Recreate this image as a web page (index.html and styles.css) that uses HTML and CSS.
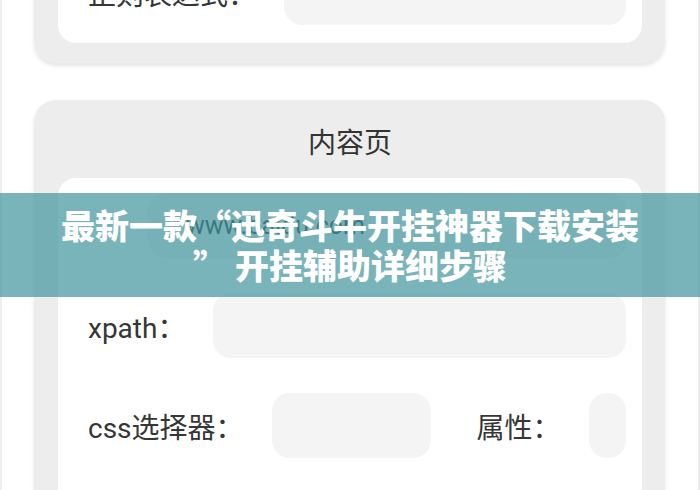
FILE: index.html
```html
<!DOCTYPE html>
<html lang="zh-CN">
<head>
    <meta charset="UTF-8">
    <meta name="viewport" content="width=device-width, initial-scale=1.0">
    <title>最新一款迅奇斗牛开挂神器下载安装</title>
    <link rel="stylesheet" href="styles.css">
</head>
<body>
    <div class="page">
        <div class="card card-top">
            <div class="card-inner">
                <div class="row">
                    <span class="label">正则表达式：</span>
                    <div class="field"></div>
                </div>
            </div>
        </div>

        <div class="card">
            <div class="card-title">内容页</div>
            <div class="card-inner card-inner-long">
                <div class="row">
                    <div class="field field-url">www.baidu.com</div>
                </div>
                <div class="row">
                    <span class="label">xpath：</span>
                    <div class="field"></div>
                </div>
                <div class="row">
                    <span class="label">css选择器：</span>
                    <div class="field field-css"></div>
                    <span class="label">属性：</span>
                    <div class="field"></div>
                </div>
            </div>
        </div>
    </div>

    <div class="banner">最新一款“迅奇斗牛开挂神器下载安装<br>” 开挂辅助详细步骤</div>
</body>
</html>
```

FILE: styles.css
```css
html, body { margin: 0; padding: 0; background: #fff; overflow: hidden; }
body { font-family: Roboto, "Noto Sans CJK SC", sans-serif; color: #333; height: 490px; position: relative; }
.page { border-left: 2px solid #efefef; border-right: 2px solid #efefef; padding-bottom: 40px; }
.card { background: #ededed; border-radius: 22px; margin: 0 33px 37px 32px; padding: 21px 23px 20px 24px; box-shadow: 0 3px 4px rgba(0, 0, 0, 0.1); }
.card-top { margin-top: -80px; padding-top: 22px; }
.card-title { font-family: "Noto Sans CJK SC", sans-serif; font-size: 28px; line-height: 40px; text-align: center; color: #333; margin-bottom: 17px; }
.card-inner { background: #fff; border-radius: 18px; padding: 15px 16px 18px 30px; display: flex; flex-direction: column; gap: 35px; }
.card-top .card-inner { padding-top: 18px; }
.card-inner-long { padding-bottom: 80px; }
.row { display: flex; align-items: center; height: 65px; }
.label { font-size: 28px; white-space: nowrap; margin-right: 28px; color: #363636; }
.field { flex: 1; height: 65px; background: #f4f4f4; border-radius: 18px; box-sizing: border-box; }
.field-url { margin-left: 60px; padding-left: 38px; font-size: 25px; line-height: 65px; color: #333; }
.field-css { flex: none; width: 159px; margin-right: 46px; }
.banner { position: absolute; left: 0; right: 0; top: 193px; height: 104px; box-sizing: border-box; padding-top: 12px; background: rgba(64, 148, 158, 0.7); color: #fff; font-family: "Noto Sans CJK SC", sans-serif; font-weight: 900; font-size: 34px; line-height: 40px; text-align: center; }
```
